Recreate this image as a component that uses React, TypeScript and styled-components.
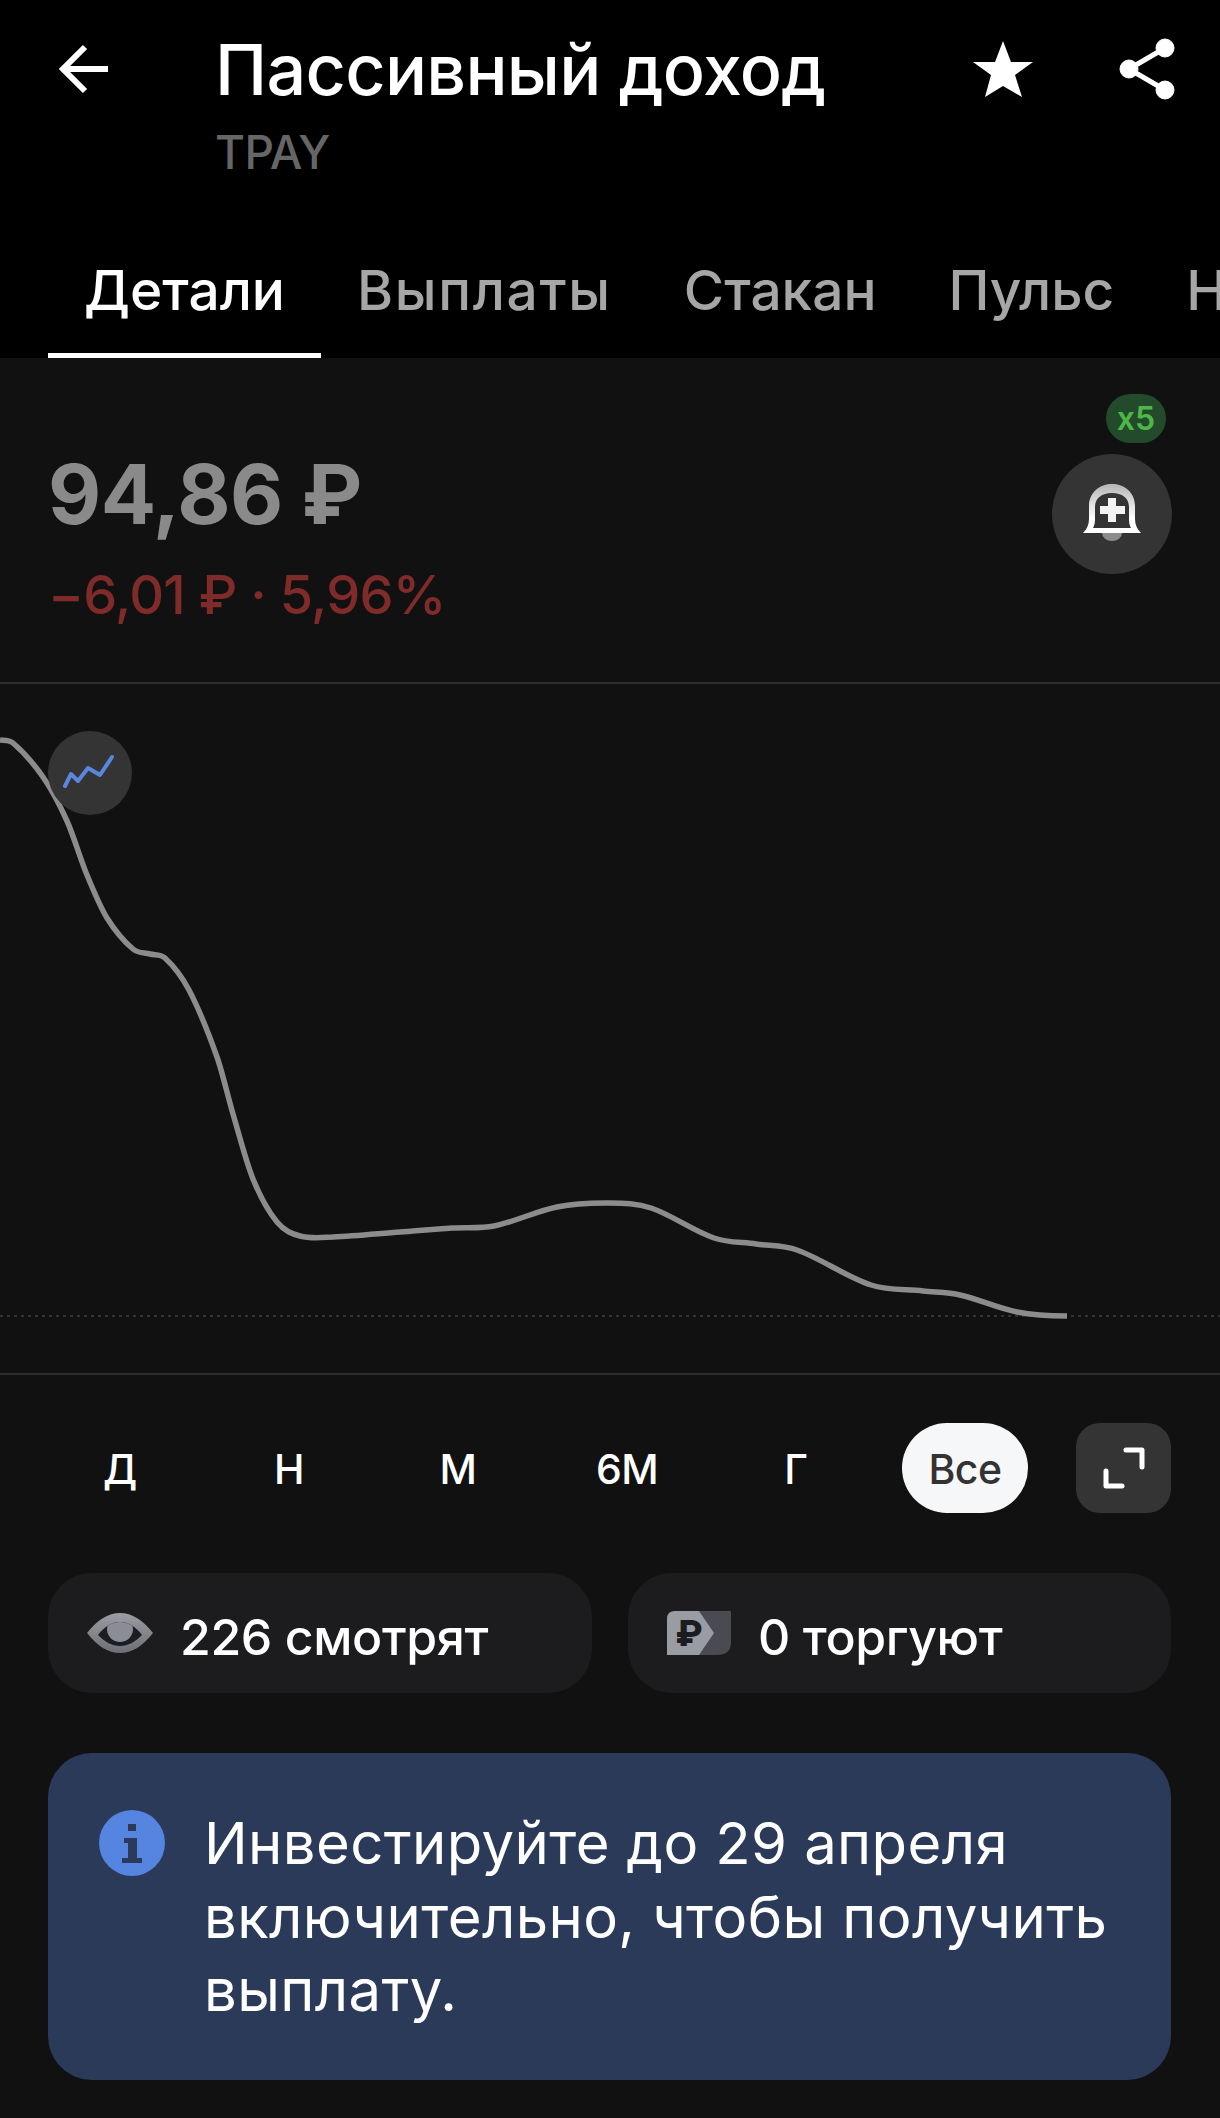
import styled, { createGlobalStyle } from "styled-components";

type TabProps = { $active?: boolean; $tracking?: number };
type RangeProps = { $active?: boolean };

const GlobalStyle = createGlobalStyle`
  html, body {
    margin: 0;
    background: #111112;
  }
  * {
    box-sizing: border-box;
  }
`;

const Page = styled.div`
  width: 1220px;
  height: 2118px;
  overflow: hidden;
  background: #111112;
  color: #fff;
  font-family: Inter, "Noto Sans", sans-serif;
`;

const Header = styled.header`
  background: #000;
  height: 358px;
`;

const TopBar = styled.div`
  height: 240px;
  display: flex;
  align-items: flex-start;
`;

const BackIcon = styled.svg`
  width: 60px;
  height: 60px;
  margin: 39px 0 0 55px;
  flex: none;
`;

const TitleBlock = styled.div`
  margin: 28px 0 0 100px;
  flex: 1;
`;

const Title = styled.h1`
  margin: 0;
  font-size: 70px;
  line-height: 84px;
  font-weight: 500;
  letter-spacing: -0.7px;
`;

const Ticker = styled.div`
  margin-top: 15px;
  font-size: 46px;
  line-height: 50px;
  font-weight: 500;
  letter-spacing: -0.6px;
  color: #666;
`;

const Actions = styled.svg`
  width: 220px;
  height: 70px;
  margin: 35px 34px 0 0;
  flex: none;
`;

const Tabs = styled.nav`
  height: 118px;
  display: flex;
  padding-left: 48px;
  overflow: hidden;
`;

const Tab = styled.div<TabProps>`
  flex: none;
  padding: 0 36px;
  height: 118px;
  font-size: 55px;
  line-height: 100px;
  font-weight: 500;
  letter-spacing: ${(p) => p.$tracking ?? 0}px;
  color: ${(p) => (p.$active ? "#fff" : "#a6a6a6")};
  border-bottom: 5px solid ${(p) => (p.$active ? "#fff" : "transparent")};
`;

const PricePanel = styled.section`
  height: 326px;
  border-bottom: 2px solid #2e2e2e;
  display: flex;
  justify-content: space-between;
  padding: 0 48px;
`;

const PriceColumn = styled.div`
  padding-top: 97px;
`;

const Price = styled.div`
  font-size: 82px;
  line-height: 80px;
  font-weight: 700;
  letter-spacing: -0.6px;
  color: #8a8a8a;
`;

const PriceChange = styled.div`
  margin-top: 30px;
  font-size: 54px;
  line-height: 60px;
  font-weight: 500;
  letter-spacing: -0.7px;
  color: #7f2b29;
`;

const AlertColumn = styled.div`
  padding-top: 36px;
  display: flex;
  flex-direction: column;
  align-items: flex-end;
`;

const Badge = styled.div`
  width: 60px;
  height: 49px;
  margin-right: 6px;
  border-radius: 25px;
  background: #234a2a;
  color: #4db848;
  font-size: 32px;
  line-height: 49px;
  font-weight: 600;
  text-align: center;
`;

const BellButton = styled.div`
  width: 120px;
  height: 120px;
  margin-top: 11px;
  border-radius: 50%;
  background: #343434;
  display: flex;
  align-items: center;
  justify-content: center;
`;

const ChartArea = styled.section`
  position: relative;
  height: 691px;
  border-bottom: 2px solid #2e2e2e;
`;

const ChartSvg = styled.svg`
  display: block;
  width: 1220px;
  height: 689px;
`;

const ChartToggle = styled.div`
  position: absolute;
  left: 48px;
  top: 47px;
  width: 84px;
  height: 84px;
  border-radius: 50%;
  background: #343434;
  display: flex;
  align-items: center;
  justify-content: center;
`;

const RangeRow = styled.div`
  display: flex;
  align-items: center;
  gap: 43px;
  padding: 48px 49px 0 57px;
`;

const RangeItem = styled.div<RangeProps>`
  width: 126px;
  height: 90px;
  flex: none;
  border-radius: 45px;
  text-align: center;
  font-size: 41px;
  line-height: 92px;
  font-weight: 500;
  letter-spacing: -0.5px;
  background: ${(p) => (p.$active ? "#f6f7f8" : "transparent")};
  color: ${(p) => (p.$active ? "#333" : "#fff")};
`;

const ExpandButton = styled.div`
  width: 95px;
  height: 90px;
  margin-left: auto;
  border-radius: 24px;
  background: #343434;
  display: flex;
  align-items: center;
  justify-content: center;
`;

const StatsRow = styled.div`
  display: grid;
  grid-template-columns: 544px 543px;
  gap: 36px;
  margin: 60px 49px 0 48px;
`;

const StatPill = styled.div`
  height: 120px;
  border-radius: 44px;
  background: #1c1c1f;
  display: flex;
  align-items: center;
  gap: 27px;
  padding-left: 39px;
`;

const StatLabel = styled.span`
  margin-top: 8px;
  font-size: 50px;
  font-weight: 500;
  letter-spacing: -0.4px;
`;

const Banner = styled.section`
  height: 327px;
  margin: 60px 49px 0 48px;
  border-radius: 44px;
  background: #2c3a59;
  display: flex;
  align-items: flex-start;
  gap: 39px;
  padding: 54px 20px 0 51px;
`;

const BannerIcon = styled.svg`
  width: 66px;
  height: 66px;
  margin-top: 3px;
  flex: none;
`;

const BannerText = styled.p`
  margin: 0;
  font-size: 58px;
  line-height: 73.5px;
  font-weight: 400;
  letter-spacing: 0.4px;
  white-space: nowrap;
`;

const chartPoints: [number, number][] = [
  [0, 740], [13, 743], [43, 777], [67, 821], [87, 875], [107, 918], [133, 949], [150, 954],
  [165, 958], [189, 990], [217, 1057], [233, 1114], [253, 1179], [277, 1222], [300, 1236],
  [333, 1237], [400, 1232], [452, 1228], [494, 1226], [557, 1207], [609, 1203], [651, 1208],
  [714, 1238], [756, 1244], [797, 1250], [871, 1285], [923, 1291], [960, 1295], [1017, 1312],
  [1067, 1316],
];

// cubic segments with the slope at each point taken from its neighbours
function smoothPath(points: [number, number][], top: number): string {
  const p = points.map(([x, y]) => [x, y - top]);
  const slope = (i: number) => {
    const a = p[Math.max(i - 1, 0)];
    const b = p[Math.min(i + 1, p.length - 1)];
    return (b[1] - a[1]) / (b[0] - a[0]);
  };
  let d = `M${p[0][0]} ${p[0][1]}`;
  for (let i = 0; i < p.length - 1; i++) {
    const b = p[i];
    const c = p[i + 1];
    const dx = (c[0] - b[0]) / 3;
    const startSlope = i === 0 ? 0.1 : slope(i);
    const endSlope = i === p.length - 2 ? 0 : slope(i + 1);
    d += ` C${b[0] + dx} ${b[1] + startSlope * dx} ${c[0] - dx} ${c[1] - endSlope * dx} ${c[0]} ${c[1]}`;
  }
  return d;
}

function BellIcon() {
  return (
    <svg width="60" height="62" viewBox="0 0 60 62" aria-hidden="true">
      <defs>
        <linearGradient id="bellFill" x1="0" y1="0" x2="0" y2="1">
          <stop offset="0" stopColor="#b5b5b5" />
          <stop offset="0.7" stopColor="#fff" />
        </linearGradient>
      </defs>
      <path d="M20 50A10 8 0 0 0 40 50Z" fill="#8c8c8c" />
      <path
        d="M1 50Q7 44 7 36V23C7 9 18 1 30 1S53 9 53 23V36Q53 44 59 50Z"
        fill="url(#bellFill)"
      />
      <path
        d="M11 45Q13 42 13 36V24C13 15 20 10 30 10S47 15 47 24V36Q47 42 49 45Z"
        fill="#343434"
      />
      <path d="M26 15H34V23H43V31H34V39H26V31H18V23H26Z" fill="#f2f2f2" />
    </svg>
  );
}

function EyeIcon() {
  return (
    <svg width="66" height="40" viewBox="0 0 66 40" aria-hidden="true">
      <defs>
        <linearGradient id="eyeFill" x1="0" y1="0" x2="0" y2="1">
          <stop offset="0" stopColor="#9b9da3" />
          <stop offset="1" stopColor="#6d6f75" />
        </linearGradient>
        <clipPath id="eyeClip">
          <path d="M11 22C18 13 25 9 33 9S48 13 55 22C48 29 41 33 33 33S18 29 11 22Z" />
        </clipPath>
      </defs>
      <path d="M0 20C10 7 21 0 33 0S56 7 66 20C56 33 45 40 33 40S10 33 0 20Z" fill="url(#eyeFill)" />
      <path d="M11 22C18 13 25 9 33 9S48 13 55 22C48 29 41 33 33 33S18 29 11 22Z" fill="#1b1d26" />
      <circle cx="33" cy="16" r="13" fill="#8b8d94" clipPath="url(#eyeClip)" />
    </svg>
  );
}

function RubleTagIcon() {
  return (
    <svg width="64" height="46" viewBox="0 0 64 46" aria-hidden="true">
      <path d="M30 1H64V32Q64 45 50 45H30Z" fill="#4a4b50" />
      <path d="M8 1H32L47 23L32 45H0V9Q0 1 8 1Z" fill="#9a9ca3" />
      <text x="22" y="36" textAnchor="middle" fontFamily="Inter" fontWeight="800" fontSize="36" fill="#1b1c20">
        ₽
      </text>
    </svg>
  );
}

export default function App(): JSX.Element {
  return (
    <Page>
      <GlobalStyle />
      <Header>
        <TopBar>
          <BackIcon viewBox="0 0 60 60" aria-hidden="true">
            <path d="M53 30H8M30 8L8 30L30 52" fill="none" stroke="#fff" strokeWidth="6" />
          </BackIcon>
          <TitleBlock>
            <Title>Пассивный доход</Title>
            <Ticker>TPAY</Ticker>
          </TitleBlock>
          <Actions viewBox="0 0 220 70" aria-hidden="true">
            <path d="M37 6L45 27H67L49 40L56 62L37 51L19 62L25 40L7 27H29Z" fill="#fff" />
            <g fill="#fff" stroke="#fff">
              <circle cx="199" cy="13" r="9" />
              <circle cx="163" cy="34" r="9" />
              <circle cx="199" cy="55" r="9" />
              <path d="M199 13L163 34L199 55" fill="none" strokeWidth="5" />
            </g>
          </Actions>
        </TopBar>
        <Tabs>
          <Tab $active>Детали</Tab>
          <Tab $tracking={1.7}>Выплаты</Tab>
          <Tab>Стакан</Tab>
          <Tab>Пульс</Tab>
          <Tab>Новости</Tab>
        </Tabs>
      </Header>

      <PricePanel>
        <PriceColumn>
          <Price>94,86 ₽</Price>
          <PriceChange>−6,01 ₽ · 5,96%</PriceChange>
        </PriceColumn>
        <AlertColumn>
          <Badge>x5</Badge>
          <BellButton>
            <BellIcon />
          </BellButton>
        </AlertColumn>
      </PricePanel>

      <ChartArea>
        <ChartSvg viewBox="0 0 1220 689" aria-hidden="true">
          <path d="M0 632H1220" stroke="#333" strokeWidth="2" strokeDasharray="3 4" />
          <path d={smoothPath(chartPoints, 684)} fill="none" stroke="#8c8c8c" strokeWidth="5.5" />
        </ChartSvg>
        <ChartToggle>
          <svg width="84" height="84" viewBox="0 0 84 84" aria-hidden="true">
            <path
              d="M17 55L23 43L30 50L40 37L52 44L64 26"
              fill="none"
              stroke="#5a86e0"
              strokeWidth="4"
              strokeLinecap="round"
              strokeLinejoin="round"
            />
          </svg>
        </ChartToggle>
      </ChartArea>

      <RangeRow>
        <RangeItem>Д</RangeItem>
        <RangeItem>Н</RangeItem>
        <RangeItem>М</RangeItem>
        <RangeItem>6М</RangeItem>
        <RangeItem>Г</RangeItem>
        <RangeItem $active>Все</RangeItem>
        <ExpandButton>
          <svg width="95" height="90" viewBox="0 0 95 90" aria-hidden="true">
            <path
              d="M50 27H66V44M30 48V63H46"
              fill="none"
              stroke="#fff"
              strokeWidth="5"
              strokeLinecap="round"
              strokeLinejoin="round"
            />
          </svg>
        </ExpandButton>
      </RangeRow>

      <StatsRow>
        <StatPill>
          <EyeIcon />
          <StatLabel>226 смотрят</StatLabel>
        </StatPill>
        <StatPill>
          <RubleTagIcon />
          <StatLabel>0 торгуют</StatLabel>
        </StatPill>
      </StatsRow>

      <Banner>
        <BannerIcon viewBox="0 0 66 66" aria-hidden="true">
          <circle cx="33" cy="33" r="33" fill="#5585e0" />
          <path d="M29 14H37V21H29ZM25 28H38V48H43V53H23V48H29V33H25Z" fill="#2c3a59" />
        </BannerIcon>
        <BannerText>
          Инвестируйте до 29 апреля
          <br />
          включительно, чтобы получить
          <br />
          выплату.
        </BannerText>
      </Banner>
    </Page>
  );
}
